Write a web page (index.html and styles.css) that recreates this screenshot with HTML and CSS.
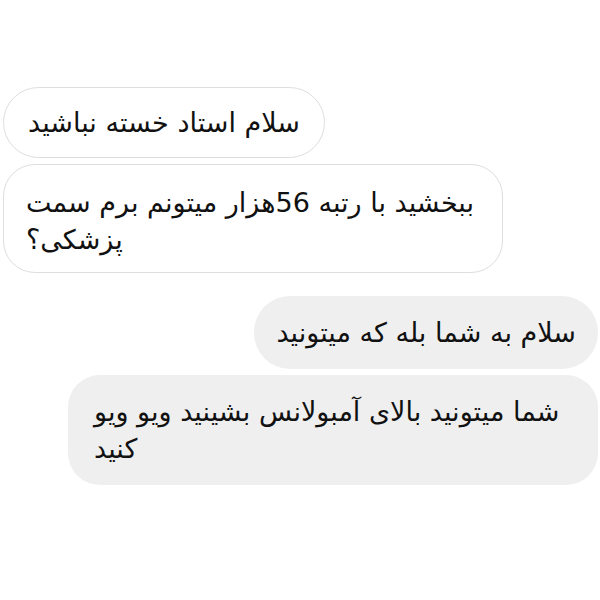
FILE: index.html
```html
<!DOCTYPE html>
<html lang="fa">
<head>
  <meta charset="UTF-8">
  <title>گفتگو</title>
  <link rel="stylesheet" href="styles.css">
</head>
<body>

  <div class="chat">
    <!-- پیام‌های دریافتی -->
    <div class="group in">
      <div class="bubble">سلام استاد خسته نباشید</div>
      <div class="bubble wide">ببخشید با رتبه 56هزار میتونم برم سمت پزشکی؟</div>
    </div>

    <!-- پیام‌های ارسالی -->
    <div class="group out">
      <div class="bubble">سلام به شما بله که میتونید</div>
      <div class="bubble wide">شما میتونید بالای آمبولانس بشینید ویو ویو کنید</div>
    </div>
  </div>

</body>
</html>
```

FILE: styles.css
```css
body {
  margin: 0;
  background: #fff;
  color: #111;
  font-family: "DejaVu Sans", "Noto Sans", sans-serif;
}
.chat {
  padding: 87px 2px 0 3px;
}
.group {
  display: flex;
  flex-direction: column;
  gap: 6px;
}
.group + .group {
  margin-top: 23px;
}
.in { align-items: flex-start; }
.out { align-items: flex-end; }

.bubble {
  direction: rtl;
  text-align: left;
  font-size: 27px;
  line-height: 37px;
  padding: 18px 22px;
  border-radius: 36px;
  box-sizing: border-box;
}
.in .bubble {
  background: #fff;
  border: 1.5px solid #dedede;
  padding: 16px 24px;
}
.in .wide { padding: 19px 22px 14px; }
.out .bubble {
  background: #efefef;
}
.in .wide { width: 500px; border-radius: 32px; }
.out .wide { width: 530px; border-radius: 32px; padding: 18px 26px; }
```
